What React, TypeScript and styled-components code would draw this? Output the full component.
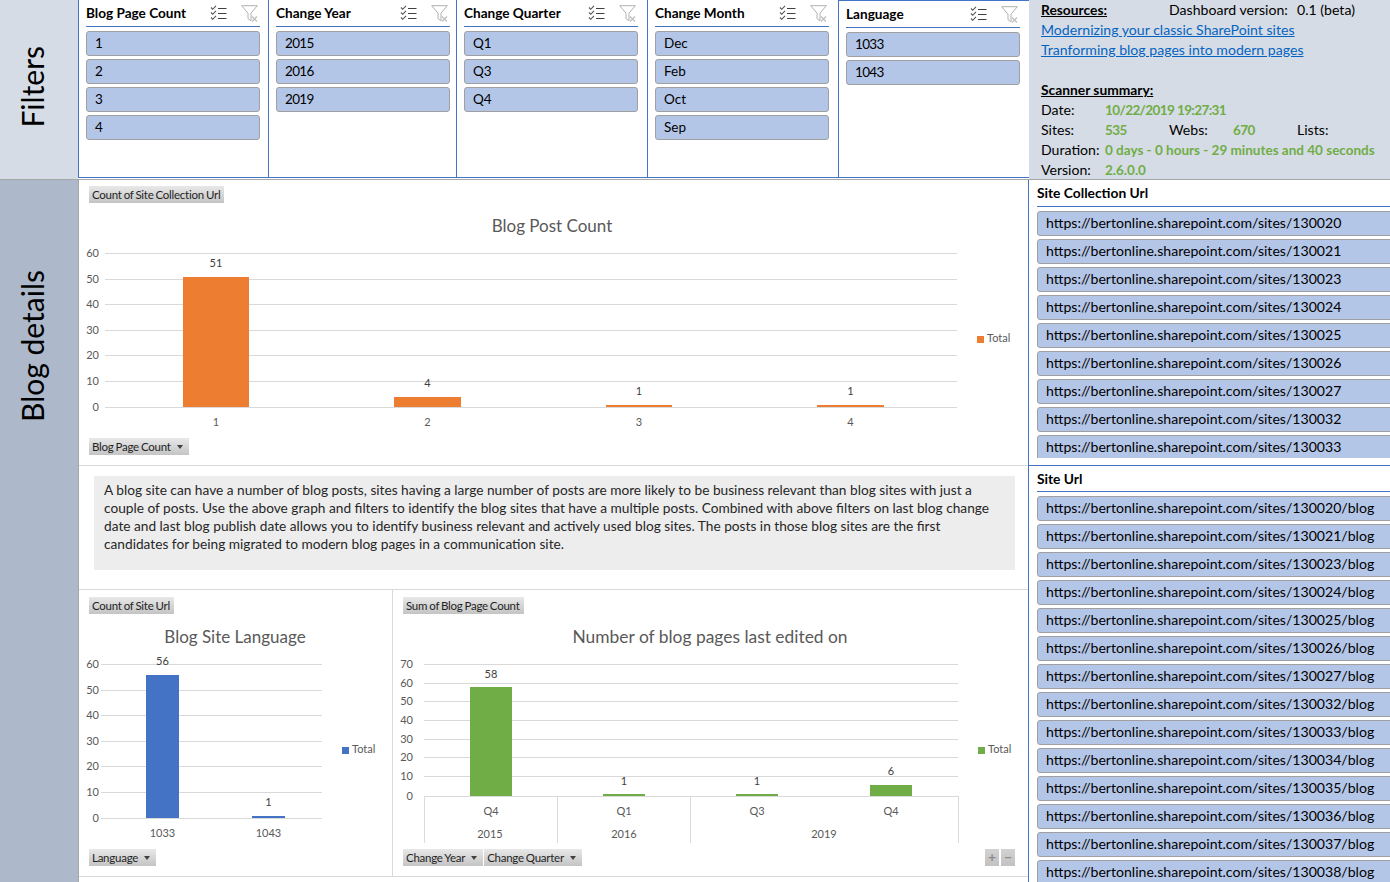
import React from "react";
import styled, { createGlobalStyle } from "styled-components";

const Global = createGlobalStyle`
  html, body { margin: 0; padding: 0; background: #fff; overflow: hidden; }
  body { font-family: Lato, "Open Sans", sans-serif; color: #000; }
  #root { width: 1390px; height: 882px; overflow: hidden; }
`;

const Page = styled.div`
  width: 1390px;
  height: 882px;
  display: flex;
  flex-direction: column;
  overflow: hidden;
`;
const TopRow = styled.div`
  display: flex;
  height: 180px;
  flex: none;
`;
const BottomRow = styled.div`
  display: flex;
  flex: 1;
  min-height: 0;
`;
const FilterLabel = styled.div`
  width: 78px;
  flex: none;
  box-sizing: border-box;
  background: #d6dce5;
  display: flex;
  align-items: center;
  padding: 0 0 6px 15px;
  border-bottom: 1px solid #a6a6a6;
`;
const DetailLabel = styled.div`
  width: 78px;
  flex: none;
  box-sizing: border-box;
  background: #adb9ca;
  display: flex;
  align-items: flex-start;
  padding: 90px 0 0 15px;
`;
const SideLabelText = styled.span`
  writing-mode: vertical-rl;
  transform: rotate(180deg);
  font-size: 30px;
  line-height: 34px;
  color: #000;
  white-space: nowrap;
`;
const Slicers = styled.div`
  width: 951px;
  flex: none;
  display: grid;
  grid-template-columns: 190px 188px 191px 191px 191px;
  border-bottom: 1px solid #a6a6a6;
  padding-bottom: 1px;
  box-sizing: border-box;
`;
const Slicer = styled.section<{ $active?: boolean }>`
  box-sizing: border-box;
  border-left: 1px solid #4472c4;
  border-bottom: 1px solid #4472c4;
  border-top: ${(p) => (p.$active ? "1px solid #4472c4" : "0")};
  padding: 0 8px 0 7px;
  background: #fff;
`;
const SlicerHead = styled.header`
  height: 27px;
  width: 174px;
  box-sizing: border-box;
  border-bottom: 1px solid #4472c4;
  display: flex;
  align-items: center;
  margin-bottom: 4px;
  padding-right: 2px;
`;
const HeadTitle = styled.span`
  font-size: 13.6px;
  font-weight: 700;
  flex: 1;
  white-space: nowrap;
`;
const IconSlot = styled.span<{ $gap: number }>`
  display: flex;
  margin-left: ${(p) => p.$gap}px;
`;
const SlicerItems = styled.div`
  display: flex;
  flex-direction: column;
  gap: 3px;
`;
const Chip = styled.div<{ $numeric?: boolean }>`
  box-sizing: border-box;
  height: 25px;
  width: 174px;
  flex: none;
  background: #b4c6e7;
  border: 1px solid #a0a0a0;
  border-radius: 3px;
  padding-left: 8px;
  font-size: 13.5px;
  letter-spacing: ${(p) => (p.$numeric ? "-0.7px" : "0")};
  line-height: 23px;
  color: #000;
  white-space: nowrap;
`;
const UrlChip = styled(Chip)`
  width: 400px;
  font-size: 14.1px;
  line-height: 22px;
`;
const Resources = styled.aside`
  flex: 1;
  background: #d6dce5;
  box-sizing: border-box;
  padding-left: 12px;
  display: grid;
  grid-template-columns: repeat(5, 64px);
  grid-auto-rows: 20px;
  border-bottom: 1px solid #a6a6a6;
  font-size: 14.1px;
  line-height: 20px;
  white-space: nowrap;
`;
const Cell = styled.div<{ $span?: number; $bold?: boolean; $tight?: boolean; $green?: boolean }>`
  grid-column: span ${(p) => p.$span ?? 1};
  font-weight: ${(p) => (p.$bold || p.$green ? 700 : 400)};
  font-size: ${(p) => (p.$green ? "13.5px" : p.$bold ? "13.8px" : "14.1px")};
  text-decoration: ${(p) => (p.$bold ? "underline" : "none")};
  letter-spacing: ${(p) => (p.$tight ? "-0.6px" : "0")};
  color: ${(p) => (p.$green ? "#70ad47" : "#000")};
`;
const LinkCell = styled.a`
  grid-column: span 5;
  color: #0563c1;
  text-decoration: underline;
`;
const Main = styled.main`
  width: 950px;
  flex: none;
  box-sizing: border-box;
  border-left: 1px solid #a6a6a6;
  display: flex;
  flex-direction: column;
`;
const ChartPanel = styled.section`
  box-sizing: border-box;
  padding: 7px 0 0 10px;
  display: flex;
  flex-direction: column;
`;
const WideChart = styled(ChartPanel)`
  height: 286px;
  padding-top: 6px;
  border-bottom: 1px solid #d9d9d9;
`;
const Note = styled.section`
  height: 124px;
  box-sizing: border-box;
  padding: 10px 13px 19px 15px;
  border-bottom: 1px solid #d9d9d9;
`;
const NoteBox = styled.p`
  margin: 0;
  height: 94px;
  box-sizing: border-box;
  background: #ededed;
  padding: 5px 10px;
  font-size: 13.7px;
  line-height: 18px;
  color: #262626;
`;
const ChartRow = styled.div`
  display: grid;
  grid-template-columns: 314px 1fr;
  height: 287px;
  border-bottom: 1px solid #d9d9d9;
  box-sizing: border-box;
`;
const SplitChart = styled(ChartPanel)<{ $divider?: boolean }>`
  border-right: ${(p) => (p.$divider ? "1px solid #d9d9d9" : "0")};
`;
const Tag = styled.span<{ $caret?: boolean }>`
  display: inline-flex;
  align-items: center;
  gap: 6px;
  height: 17px;
  padding: 0 ${(p) => (p.$caret ? "6px" : "4px")} 0 3px;
  background: linear-gradient(#e8e8e8, #c4c4c4);
  font-size: 11.5px;
  letter-spacing: -0.25px;
  word-spacing: -0.7px;
  color: #1f1f1f;
  white-space: nowrap;
  flex: none;
`;
const Caret = styled.i`
  width: 0;
  height: 0;
  border-left: 3.5px solid transparent;
  border-right: 3.5px solid transparent;
  border-top: 4px solid #404040;
`;
const TagRow = styled.div`
  display: flex;
  gap: 1px;
  height: 17px;
  padding-right: 13px;
`;
const Plot = styled.svg`
  display: block;
  margin: 1px 0 1px -10px;
  flex: none;
  font-family: Lato, sans-serif;
`;
const PlusMinus = styled.span`
  width: 14px;
  height: 17px;
  margin-left: 1px;
  background: linear-gradient(#d2d2d2, #c2c2c2);
  color: #8c8c8c;
  font-size: 14px;
  font-weight: 700;
  line-height: 16px;
  text-align: center;
  flex: none;
`;
const Spacer = styled.span`
  flex: 1;
`;
const SidePanel = styled.aside`
  width: 362px;
  flex: none;
  box-sizing: border-box;
  border-left: 1px solid #4472c4;
  display: flex;
  flex-direction: column;
  overflow: hidden;
`;
const CollectionSection = styled.section`
  box-sizing: border-box;
  padding: 0 0 7px 8px;
  flex: none;
  height: 286px;
  border-bottom: 1px solid #4472c4;
  display: flex;
  flex-direction: column;
`;
const SiteSection = styled.section`
  box-sizing: border-box;
  padding-left: 8px;
  flex: 1;
  min-height: 0;
  display: flex;
  flex-direction: column;
`;
const ListTitle = styled.h3<{ $h: number }>`
  margin: 0 0 4px;
  flex: none;
  height: ${(p) => p.$h}px;
  box-sizing: border-box;
  border-bottom: 1px solid #4472c4;
  font-size: 13.8px;
  font-weight: 700;
  line-height: ${(p) => p.$h - 1}px;
`;
const ListBody = styled.div`
  flex: 1;
  min-height: 0;
  overflow: hidden;
  display: flex;
  flex-direction: column;
  gap: 3px;
`;

const ChecklistIcon = () => (
  <svg width="17" height="16" viewBox="0 0 17 16" fill="none">
    <path d="M1 2.5 2.7 4.3 6 .8M1 7.5 2.7 9.3 6 5.8M1 12.5 2.7 14.3 6 10.8" stroke="#555" strokeWidth="1.1" />
    <path d="M8 3.5h8.5M8 8.5h8.5M8 13.5h8.5" stroke="#404040" strokeWidth="1" />
  </svg>
);
const ClearIcon = () => (
  <svg width="17" height="17" viewBox="0 0 17 17" fill="none">
    <path d="M.7 .7H16.3L10 8.2V15.8L7 13.6V8.2Z" stroke="#b0b0b0" strokeWidth="1" fill="#fff" />
    <path d="M11 11.5 16 16.5M16 11.5 11 16.5" stroke="#c0c0c0" strokeWidth="1.4" />
  </svg>
);

const slicers = [
  { title: "Blog Page Count", items: ["1", "2", "3", "4"] },
  { title: "Change Year", items: ["2015", "2016", "2019"] },
  { title: "Change Quarter", items: ["Q1", "Q3", "Q4"] },
  { title: "Change Month", items: ["Dec", "Feb", "Oct", "Sep"] },
  { title: "Language", items: ["1033", "1043"], active: true },
];

const collectionIds = ["130020", "130021", "130023", "130024", "130025", "130026", "130027", "130032", "130033"];
const siteIds = [...collectionIds, "130034", "130035", "130036", "130037", "130038"];
const base = "https://bertonline.sharepoint.com/sites/";

type Bar = { x: number; w: number; top: number; bottom: number; value: string; labelY: number; cat: string; catY: number };
type ChartSpec = {
  box: [number, number, number, number];
  title: string;
  titleSize: number;
  titleX: number;
  titleY: number;
  grid: { y: number; label: string }[];
  gridFrom: number;
  gridTo: number;
  tickX: number;
  color: string;
  bars: Bar[];
  legendX: number;
  legendY: number;
};

const GREY = "#595959";
const Chart = ({ spec, children }: { spec: ChartSpec; children?: React.ReactNode }) => {
  const [x, y, w, h] = spec.box;
  return (
    <Plot width={w} height={h} viewBox={`${x} ${y} ${w} ${h}`}>
      <text x={spec.titleX} y={spec.titleY} fontSize={spec.titleSize} fill={GREY} textAnchor="middle">{spec.title}</text>
      {spec.grid.map((g) => (
        <g key={g.label}>
          <line x1={spec.gridFrom} x2={spec.gridTo} y1={g.y + 0.5} y2={g.y + 0.5} stroke="#d9d9d9" />
          <text x={spec.tickX} y={g.y + 3.5} fontSize="11" fill={GREY} textAnchor="end">{g.label}</text>
        </g>
      ))}
      {spec.bars.map((b, i) => (
        <g key={i}>
          <rect x={b.x} y={b.top} width={b.w} height={b.bottom - b.top} fill={spec.color} />
          <text x={b.x + b.w / 2} y={b.labelY} fontSize="11" fill="#404040" textAnchor="middle">{b.value}</text>
          <text x={b.x + b.w / 2} y={b.catY} fontSize="11" fill={GREY} textAnchor="middle">{b.cat}</text>
        </g>
      ))}
      <rect x={spec.legendX} y={spec.legendY} width="7" height="7" fill={spec.color} />
      <text x={spec.legendX + 10} y={spec.legendY + 6} fontSize="11" fill={GREY}>Total</text>
      {children}
    </Plot>
  );
};

const postChart: ChartSpec = {
  box: [79, 204, 949, 233],
  title: "Blog Post Count",
  titleSize: 17,
  titleX: 552,
  titleY: 232,
  grid: [
    { y: 253, label: "60" }, { y: 279, label: "50" }, { y: 304, label: "40" }, { y: 330, label: "30" },
    { y: 355, label: "20" }, { y: 381, label: "10" }, { y: 407, label: "0" },
  ],
  gridFrom: 105,
  gridTo: 957,
  tickX: 99,
  color: "#ed7d31",
  bars: [
    { x: 183, w: 66, top: 277, bottom: 407, value: "51", labelY: 267, cat: "1", catY: 426 },
    { x: 394, w: 67, top: 397, bottom: 407, value: "4", labelY: 387, cat: "2", catY: 426 },
    { x: 606, w: 66, top: 405, bottom: 407, value: "1", labelY: 395, cat: "3", catY: 426 },
    { x: 817, w: 67, top: 405, bottom: 407, value: "1", labelY: 395, cat: "4", catY: 426 },
  ],
  legendX: 977,
  legendY: 336,
};
const langChart: ChartSpec = {
  box: [79, 615, 313, 233],
  title: "Blog Site Language",
  titleSize: 17,
  titleX: 235,
  titleY: 643,
  grid: [
    { y: 664, label: "60" }, { y: 690, label: "50" }, { y: 715, label: "40" }, { y: 741, label: "30" },
    { y: 766, label: "20" }, { y: 792, label: "10" }, { y: 818, label: "0" },
  ],
  gridFrom: 101,
  gridTo: 322,
  tickX: 99,
  color: "#4472c4",
  bars: [
    { x: 146, w: 33, top: 675, bottom: 818, value: "56", labelY: 665, cat: "1033", catY: 837 },
    { x: 252, w: 33, top: 816, bottom: 818, value: "1", labelY: 806, cat: "1043", catY: 837 },
  ],
  legendX: 342,
  legendY: 747,
};
const editChart: ChartSpec = {
  box: [393, 615, 635, 233],
  title: "Number of blog pages last edited on",
  titleSize: 17.4,
  titleX: 710,
  titleY: 643,
  grid: [
    { y: 664, label: "70" }, { y: 683, label: "60" }, { y: 701, label: "50" }, { y: 720, label: "40" },
    { y: 739, label: "30" }, { y: 757, label: "20" }, { y: 776, label: "10" }, { y: 796, label: "0" },
  ],
  gridFrom: 424,
  gridTo: 958,
  tickX: 413,
  color: "#70ad47",
  bars: [
    { x: 470, w: 42, top: 687, bottom: 796, value: "58", labelY: 678, cat: "Q4", catY: 815 },
    { x: 603, w: 42, top: 794, bottom: 796, value: "1", labelY: 785, cat: "Q1", catY: 815 },
    { x: 736, w: 42, top: 794, bottom: 796, value: "1", labelY: 785, cat: "Q3", catY: 815 },
    { x: 870, w: 42, top: 785, bottom: 796, value: "6", labelY: 775, cat: "Q4", catY: 815 },
  ],
  legendX: 978,
  legendY: 747,
};

export default function App() {
  return (
    <Page>
      <Global />
      <TopRow>
        <FilterLabel>
          <SideLabelText>Filters</SideLabelText>
        </FilterLabel>
        <Slicers>
          {slicers.map((s) => (
            <Slicer key={s.title} $active={s.active}>
              <SlicerHead>
                <HeadTitle>{s.title}</HeadTitle>
                <IconSlot $gap={0}><ChecklistIcon /></IconSlot>
                <IconSlot $gap={14}><ClearIcon /></IconSlot>
              </SlicerHead>
              <SlicerItems>
                {s.items.map((it) => (
                  <Chip key={it} $numeric={/^\d{4}$/.test(it)}>{it}</Chip>
                ))}
              </SlicerItems>
            </Slicer>
          ))}
        </Slicers>
        <Resources>
          <Cell $span={2} $bold>Resources:</Cell>
          <Cell $span={2}>Dashboard version:</Cell>
          <Cell>0.1 (beta)</Cell>
          <LinkCell>Modernizing your classic SharePoint sites</LinkCell>
          <LinkCell>Tranforming blog pages into modern pages</LinkCell>
          <Cell $span={5} />
          <Cell $span={5} $bold>Scanner summary:</Cell>
          <Cell>Date:</Cell>
          <Cell $span={4} $green $tight>10/22/2019 19:27:31</Cell>
          <Cell>Sites:</Cell>
          <Cell $green $tight>535</Cell>
          <Cell>Webs:</Cell>
          <Cell $green $tight>670</Cell>
          <Cell>Lists:</Cell>
          <Cell>Duration:</Cell>
          <Cell $span={4} $green>0 days - 0 hours - 29 minutes and 40 seconds</Cell>
          <Cell>Version:</Cell>
          <Cell $span={4} $green>2.6.0.0</Cell>
        </Resources>
      </TopRow>
      <BottomRow>
        <DetailLabel>
          <SideLabelText>Blog details</SideLabelText>
        </DetailLabel>
        <Main>
          <WideChart>
            <TagRow><Tag>Count of Site Collection Url</Tag></TagRow>
            <Chart spec={postChart} />
            <TagRow><Tag $caret>Blog Page Count <Caret /></Tag></TagRow>
          </WideChart>
          <Note>
            <NoteBox>
              A blog site can have a number of blog posts, sites having a large number of posts are more likely to be business relevant than blog sites with just a couple of posts. Use the above graph and filters to identify the blog sites that have a multiple posts. Combined with above filters on last blog change date and last blog publish date allows you to identify business relevant and actively used blog sites. The posts in those blog sites are the first candidates for being migrated to modern blog pages in a communication site.
            </NoteBox>
          </Note>
          <ChartRow>
            <SplitChart $divider>
              <TagRow><Tag>Count of Site Url</Tag></TagRow>
              <Chart spec={langChart} />
              <TagRow><Tag $caret>Language <Caret /></Tag></TagRow>
            </SplitChart>
            <SplitChart>
              <TagRow><Tag>Sum of Blog Page Count</Tag></TagRow>
              <Chart spec={editChart}>
                {[424, 557, 690, 958].map((x) => (
                  <line key={x} x1={x + 0.5} x2={x + 0.5} y1={796} y2={843} stroke="#d9d9d9" />
                ))}
                {[["2015", 490], ["2016", 624], ["2019", 824]].map(([t, x]) => (
                  <text key={t} x={x} y={838} fontSize="11" fill={GREY} textAnchor="middle">{t}</text>
                ))}
              </Chart>
              <TagRow>
                <Tag $caret>Change Year <Caret /></Tag>
                <Tag $caret>Change Quarter <Caret /></Tag>
                <Spacer />
                <PlusMinus>+</PlusMinus>
                <PlusMinus>−</PlusMinus>
              </TagRow>
            </SplitChart>
          </ChartRow>
        </Main>
        <SidePanel>
          <CollectionSection>
            <ListTitle $h={27}>Site Collection Url</ListTitle>
            <ListBody>
              {collectionIds.map((id) => (
                <UrlChip key={id}>{base + id}</UrlChip>
              ))}
            </ListBody>
          </CollectionSection>
          <SiteSection>
            <ListTitle $h={26}>Site Url</ListTitle>
            <ListBody>
              {siteIds.map((id) => (
                <UrlChip key={id}>{base + id + "/blog"}</UrlChip>
              ))}
            </ListBody>
          </SiteSection>
        </SidePanel>
      </BottomRow>
    </Page>
  );
}
